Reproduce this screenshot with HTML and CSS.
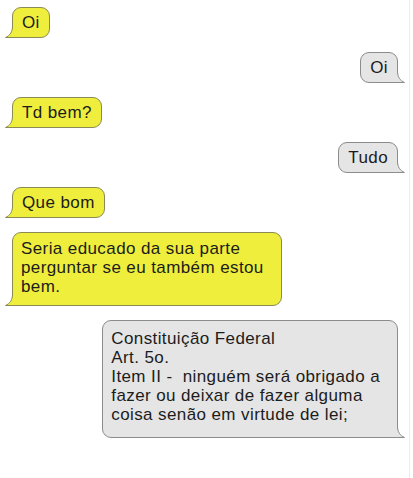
FILE: index.html
```html
<!DOCTYPE html>
<html lang="pt-BR">
<head>
    <meta charset="UTF-8">
    <meta name="viewport" content="width=device-width, initial-scale=1.0">
    <title>Conversa</title>
    <link rel="stylesheet" href="styles.css">
</head>
<body>
    <div class="chat">
        <div class="row left">
            <div class="bubble yellow">Oi
                <svg class="tail" width="10" height="12" viewBox="0 0 10 12"><path class="tail-fill" d="M7.5,0 C7.5,6 5,9.5 0.5,11.5 L10,11.5 L10,0 Z"/><path class="tail-line" d="M7.5,0 C7.5,6 5,9.5 0.5,11.5 L10,11.5"/></svg>
            </div>
        </div>
        <div class="row right">
            <div class="bubble grey">Oi
                <svg class="tail" width="10" height="12" viewBox="0 0 10 12"><path class="tail-fill" d="M7.5,0 C7.5,6 5,9.5 0.5,11.5 L10,11.5 L10,0 Z"/><path class="tail-line" d="M7.5,0 C7.5,6 5,9.5 0.5,11.5 L10,11.5"/></svg>
            </div>
        </div>
        <div class="row left">
            <div class="bubble yellow">Td bem?
                <svg class="tail" width="10" height="12" viewBox="0 0 10 12"><path class="tail-fill" d="M7.5,0 C7.5,6 5,9.5 0.5,11.5 L10,11.5 L10,0 Z"/><path class="tail-line" d="M7.5,0 C7.5,6 5,9.5 0.5,11.5 L10,11.5"/></svg>
            </div>
        </div>
        <div class="row right">
            <div class="bubble grey">Tudo
                <svg class="tail" width="10" height="12" viewBox="0 0 10 12"><path class="tail-fill" d="M7.5,0 C7.5,6 5,9.5 0.5,11.5 L10,11.5 L10,0 Z"/><path class="tail-line" d="M7.5,0 C7.5,6 5,9.5 0.5,11.5 L10,11.5"/></svg>
            </div>
        </div>
        <div class="row left">
            <div class="bubble yellow">Que bom
                <svg class="tail" width="10" height="12" viewBox="0 0 10 12"><path class="tail-fill" d="M7.5,0 C7.5,6 5,9.5 0.5,11.5 L10,11.5 L10,0 Z"/><path class="tail-line" d="M7.5,0 C7.5,6 5,9.5 0.5,11.5 L10,11.5"/></svg>
            </div>
        </div>
        <div class="row left">
            <div class="bubble yellow long">Seria educado da sua parte<br>perguntar se eu também estou<br>bem.
                <svg class="tail" width="10" height="12" viewBox="0 0 10 12"><path class="tail-fill" d="M7.5,0 C7.5,6 5,9.5 0.5,11.5 L10,11.5 L10,0 Z"/><path class="tail-line" d="M7.5,0 C7.5,6 5,9.5 0.5,11.5 L10,11.5"/></svg>
            </div>
        </div>
        <div class="row right">
            <div class="bubble grey long law">Constituição Federal<br>Art. 5o.<br>Item II -&nbsp; ninguém será obrigado a<br>fazer ou deixar de fazer alguma<br>coisa senão em virtude de lei;
                <svg class="tail" width="10" height="12" viewBox="0 0 10 12"><path class="tail-fill" d="M7.5,0 C7.5,6 5,9.5 0.5,11.5 L10,11.5 L10,0 Z"/><path class="tail-line" d="M7.5,0 C7.5,6 5,9.5 0.5,11.5 L10,11.5"/></svg>
            </div>
        </div>
    </div>
</body>
</html>
```

FILE: styles.css
```css
body, html {
    margin: 0;
    padding: 0;
    background-color: #ffffff;
    font-family: "Liberation Sans", Arial, sans-serif;
}

.chat {
    width: 410px;
    min-height: 478px;
    box-sizing: border-box;
    border-right: 1px solid #ececec;
    padding: 7px 12px 0 12px;
    display: flex;
    flex-direction: column;
    gap: 14px;
}

.row {
    display: flex;
}

.row.left {
    justify-content: flex-start;
}

.row.right {
    justify-content: flex-end;
    margin-right: -1px;
}

.bubble {
    position: relative;
    font-size: 17px;
    letter-spacing: 0.4px;
    line-height: 19px;
    color: #1c1c1c;
    padding: 5px 9px;
    border: 1px solid #8a8a55;
    border-radius: 9px;
}

.yellow {
    background-color: #efee3c;
    border-bottom-left-radius: 0;
}

.grey {
    background-color: #e5e5e5;
    border-color: #8c8c8c;
    border-bottom-right-radius: 0;
}

.long {
    padding: 6px 17px 9px 8px;
}

.law {
    padding: 8px 17px 13px 8px;
}

.tail {
    position: absolute;
    bottom: -1px;
    left: -8px;
    overflow: visible;
}

.grey .tail {
    left: auto;
    right: -8px;
    transform: scaleX(-1);
}

.tail-fill {
    stroke: none;
}

.tail-line {
    fill: none;
    stroke-width: 1;
}

.yellow .tail-fill {
    fill: #efee3c;
}

.yellow .tail-line {
    stroke: #8a8a55;
}

.grey .tail-fill {
    fill: #e5e5e5;
}

.grey .tail-line {
    stroke: #8c8c8c;
}
```
